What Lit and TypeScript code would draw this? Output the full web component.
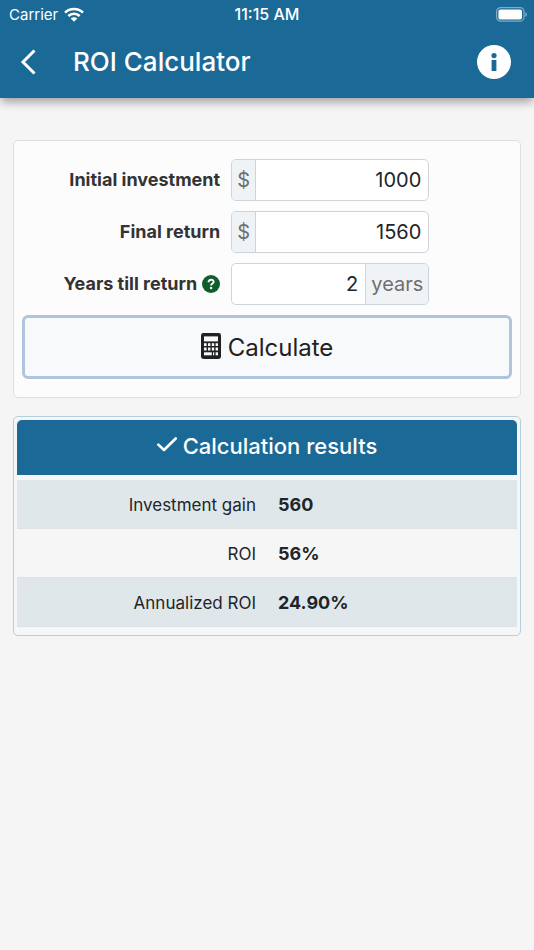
import { LitElement, html, css, svg, nothing } from "lit";
import { customElement, property, state } from "lit/decorators.js";

const wifiIcon = svg`<svg class="wifi" viewBox="0 0 20 15" aria-hidden="true">
  <g fill="none" stroke="#fff" stroke-width="2.6">
    <path d="M1 5.6C6 .7 14 .7 19 5.6"/>
    <path d="M4.3 9C7.6 5.9 12.4 5.9 15.7 9"/>
  </g>
  <path d="M6.7 11.4c1.9-1.7 4.7-1.7 6.6 0L10 14.8z" fill="#fff"/>
</svg>`;

const batteryIcon = svg`<svg class="battery" viewBox="0 0 32 15" aria-hidden="true">
  <rect x="1.6" y=".6" width="27.4" height="13.6" rx="4" fill="none" stroke="#fff" stroke-opacity=".45" stroke-width="1.2"/>
  <rect x="3.4" y="2.4" width="23.6" height="10" rx="2" fill="#fff"/>
  <path d="M30.4 5.2c2 .7 2 3.9 0 4.6z" fill="#fff" fill-opacity=".5"/>
</svg>`;

const backIcon = svg`<svg class="back-icon" viewBox="0 0 16 26" aria-hidden="true">
  <path d="M14.500 1.500L3 13 14.500 24.500" fill="none" stroke="#fff" stroke-width="3"/>
</svg>`;

const infoIcon = svg`<svg class="info-icon" viewBox="0 0 34 34" aria-hidden="true">
  <circle cx="17" cy="17" r="17" fill="#fff"/>
  <circle cx="17" cy="10.600" r="2.600" fill="#1b6997"/>
  <rect x="14.600" y="15" width="4.800" height="11" fill="#1b6997"/>
</svg>`;

const helpIcon = svg`<svg class="help-icon" viewBox="0 0 18 18" aria-hidden="true">
  <circle cx="9" cy="9" r="9" fill="#0d5f2b"/>
  <path d="M6.500 7.200C6.700 4 11.700 4 11.600 6.900 11.500 8.600 9.100 8.500 9.100 10.600" fill="none" stroke="#fff" stroke-width="1.900"/>
  <circle cx="9.100" cy="13" r="1.200" fill="#fff"/>
</svg>`;

const calculatorIcon = svg`<svg class="calc-icon" viewBox="0 0 20 26" aria-hidden="true">
  <rect width="20" height="26" rx="2.400" fill="#212121"/>
  <g fill="#f8f9fb">
    <rect x="3" y="3.400" width="14" height="5"/>
    <rect x="3" y="10.200" width="2.600" height="2.800"/><rect x="7" y="10.200" width="2.400" height="2.800"/><rect x="10.800" y="10.200" width="2.400" height="2.800"/><rect x="14.600" y="10.200" width="2.400" height="2.800"/>
    <rect x="3" y="14.500" width="2.600" height="3"/><rect x="7" y="14.500" width="2.400" height="3"/><rect x="10.800" y="14.500" width="2.400" height="3"/><rect x="14.600" y="14.500" width="2.400" height="3"/>
    <rect x="3" y="19.300" width="7.800" height="3"/><rect x="12" y="19.300" width="1.200" height="3"/><rect x="14.600" y="19.300" width="2.400" height="3"/>
  </g>
</svg>`;

const checkIcon = svg`<svg class="check-icon" viewBox="0 0 20 15" aria-hidden="true">
  <path d="M1.300 7.600L7 13 18.700 1.500" fill="none" stroke="#fff" stroke-width="2.600" stroke-linecap="round" stroke-linejoin="round"/>
</svg>`;

@customElement("money-field")
class MoneyField extends LitElement {
  @property() label = "";
  @property() value = "";
  @property() prefixText = "";
  @property() suffixText = "";
  @property({ type: Boolean }) help = false;

  static styles = css`
    :host {
      display: grid;
      grid-template-columns: 5fr 5fr 2fr;
      align-items: center;
    }
    .caption {
      display: flex;
      justify-content: flex-end;
      align-items: center;
      gap: 5px;
      padding-right: 6px;
      font-size: 18px;
      font-weight: 700;
      line-height: 24px;
      color: #333;
      white-space: nowrap;
    }
    .help {
      display: flex;
      padding: 0;
      border: 0;
      background: none;
    }
    .help-icon {
      width: 18px;
      height: 18px;
    }
    .group {
      display: flex;
      height: 42px;
      margin: 0 1px 0 5px;
      box-sizing: border-box;
      border: 1px solid #ced4da;
      border-radius: 5px;
      background: #fff;
      overflow: hidden;
    }
    input {
      flex: 1;
      min-width: 0;
      padding: 0 7px;
      border: 0;
      outline: 0;
      background: transparent;
      font: inherit;
      font-size: 20px;
      text-align: right;
      color: #212529;
    }
    .addon {
      display: flex;
      align-items: center;
      padding: 0 5px;
      background: #eff3f6;
      font-size: 20px;
      color: #6f6f6f;
    }
    .before {
      border-right: 1px solid #ced4da;
    }
    .after {
      border-left: 1px solid #ced4da;
    }
  `;

  render() {
    return html`
      <div class="caption">
        <label for="field">${this.label}</label>
        ${this.help
          ? html`<button class="help" type="button" aria-label="Help">${helpIcon}</button>`
          : nothing}
      </div>
      <div class="group">
        ${this.prefixText ? html`<span class="addon before">${this.prefixText}</span>` : nothing}
        <input id="field" type="text" inputmode="decimal" .value=${this.value} />
        ${this.suffixText ? html`<span class="addon after">${this.suffixText}</span>` : nothing}
      </div>
    `;
  }
}

@customElement("app-root")
class AppRoot extends LitElement {
  @state() private results = [
    { name: "Investment gain", value: "560" },
    { name: "ROI", value: "56%" },
    { name: "Annualized ROI", value: "24.90%" },
  ];

  static styles = css`
    :host {
      display: block;
      min-height: 100vh;
      background: #f5f5f5;
      font-family: Inter, "Liberation Sans", sans-serif;
      color: #212529;
    }
    .header {
      background: #1b6997;
      color: #fff;
      box-shadow: 0 5px 9px -1px rgba(0, 0, 0, 0.35);
    }
    .status {
      display: grid;
      grid-template-columns: 1fr auto 1fr;
      align-items: center;
      height: 28px;
      padding: 0 7px;
      font-size: 15px;
    }
    .carrier {
      display: flex;
      align-items: center;
      gap: 6px;
      padding-left: 2px;
    }
    .wifi {
      width: 20px;
      height: 15px;
    }
    .time {
      font-size: 16px;
      font-weight: 500;
    }
    .battery {
      justify-self: end;
      width: 32px;
      height: 15px;
    }
    .nav {
      display: flex;
      align-items: center;
      height: 70px;
      box-sizing: border-box;
      padding: 0 23px 2px 20px;
    }
    .nav button {
      display: flex;
      padding: 0;
      border: 0;
      background: none;
    }
    .back-icon {
      width: 16px;
      height: 26px;
    }
    .info-icon {
      width: 34px;
      height: 34px;
    }
    h1 {
      flex: 1;
      margin: 0 0 0 37px;
      font-size: 26px;
      font-weight: 500;
      line-height: 32px;
    }
    main {
      display: flex;
      flex-direction: column;
      gap: 18px;
      padding: 42px 13px 24px;
    }
    .form {
      display: flex;
      flex-direction: column;
      gap: 10px;
      padding: 18px 8px;
      border: 1px solid #dedfe1;
      border-radius: 5px;
      background: #fcfcfc;
    }
    .calculate {
      display: flex;
      justify-content: center;
      align-items: center;
      gap: 7px;
      height: 64px;
      padding: 0;
      border: 3px solid #b0c4de;
      border-radius: 6px;
      background: #f8f9fb;
      font: inherit;
      font-size: 24px;
      color: #212121;
    }
    .calc-icon {
      width: 20px;
      height: 26px;
      padding-bottom: 2px;
    }
    .results {
      padding: 3px 3px 8px;
      border: 1px solid #b4cfdf;
      border-radius: 5px;
      background: #f6f6f6;
    }
    h2 {
      display: flex;
      justify-content: center;
      align-items: center;
      gap: 6px;
      height: 55px;
      margin: 0 0 5px;
      box-sizing: border-box;
      padding-bottom: 4px;
      border-radius: 5px 5px 0 0;
      background: #1b6997;
      color: #fff;
      font-size: 22px;
      font-weight: 500;
    }
    .check-icon {
      width: 20px;
      height: 15px;
      padding-bottom: 3px;
    }
    table {
      width: 100%;
      table-layout: fixed;
      border-collapse: collapse;
      font-size: 18px;
      line-height: 24px;
    }
    th,
    td {
      width: 50%;
      padding: 13px 11px 11px;
      border-bottom: 1px solid #dee2e6;
    }
    th {
      text-align: right;
      font-size: 17px;
      font-weight: 400;
    }
    td {
      text-align: left;
      font-weight: 700;
    }
    tr:nth-child(odd) {
      background: #dfe7ea;
    }
  `;

  render() {
    return html`
      <header class="header">
        <div class="status">
          <span class="carrier">Carrier ${wifiIcon}</span>
          <span class="time">11:15 AM</span>
          ${batteryIcon}
        </div>
        <nav class="nav">
          <button type="button" aria-label="Back">${backIcon}</button>
          <h1>ROI Calculator</h1>
          <button type="button" aria-label="Information">${infoIcon}</button>
        </nav>
      </header>
      <main>
        <form class="form" @submit=${(e: Event) => e.preventDefault()}>
          <money-field label="Initial investment" value="1000" .prefixText=${"$"}></money-field>
          <money-field label="Final return" value="1560" .prefixText=${"$"}></money-field>
          <money-field label="Years till return" value="2" .suffixText=${"years"} help></money-field>
          <button class="calculate" type="submit">${calculatorIcon}<span>Calculate</span></button>
        </form>
        <section class="results">
          <h2>${checkIcon}<span>Calculation results</span></h2>
          <table>
            <tbody>
              ${this.results.map(
                (row) => html`<tr><th scope="row">${row.name}</th><td>${row.value}</td></tr>`
              )}
            </tbody>
          </table>
        </section>
      </main>
    `;
  }
}
